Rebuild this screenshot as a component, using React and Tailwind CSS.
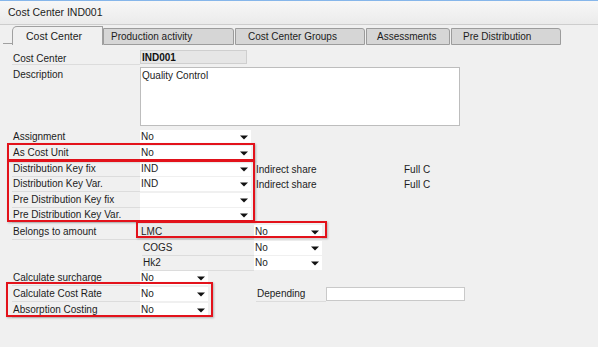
import React from 'react';

const Arrow = () => (
  <svg width="8" height="5" viewBox="0 0 8 5" className="shrink-0">
    <path d="M0 0.5 H8 L4 4.5 Z" fill="#111" />
  </svg>
);

function Label({ children, className = '' }) {
  return (
    <div className={`w-[128px] shrink-0 flex items-center pl-[1px] border-b border-[#dcdcdc] ${className}`}>
      {children}
    </div>
  );
}

function Select({ value, className = 'w-[111px]' }) {
  return (
    <div className={`h-[14px] bg-white flex items-center justify-between pl-[1px] pr-[3px] shrink-0 ${className}`}>
      <span>{value}</span>
      <Arrow />
    </div>
  );
}

function Row({ className = '', children }) {
  return <div className={`flex h-[15px] items-stretch ${className}`}>{children}</div>;
}

const Highlight = ({ className }) => (
  <div className={`absolute border-2 border-[#e3121b] shadow-[1px_1px_2px_rgba(0,0,0,0.25)] pointer-events-none ${className}`} />
);

export default function App() {
  return (
    <div className="relative w-[598px] h-[347px] overflow-hidden bg-[#f0f0f0] text-[10px] leading-none text-[#1c1c1c] font-['Liberation_Sans',Arial,sans-serif]">
      {/* window title */}
      <div className="h-px bg-[#86b6ea]" />
      <div className="h-[24px] flex items-center pl-2 bg-gradient-to-b from-[#f7f7f7] to-[#ebebeb] border-b border-[#cdcdcd] text-[10.5px]">
        Cost Center IND001
      </div>

      {/* tabs */}
      <div className="flex items-end h-[20px]">
        <div className="w-[12px] h-px bg-[#a0a0a0] mb-[1px] ml-[3px] -mr-[3px]" />
        <div className="w-[91px] h-[19px] flex items-center pl-[13px] bg-[#f0f0f0] border-l border-t border-r border-[#a0a0a0] rounded-tl-[5px] text-[10.5px]">
          Cost Center
        </div>
        <div className="w-[131px] h-[17px] flex items-center pl-[7px] bg-[#d6d6d6] border border-[#9c9c9c] rounded-tr-[3px]">
          Production activity
        </div>
        <div className="w-[130px] h-[17px] ml-[1px] flex items-center pl-[12px] bg-[#d6d6d6] border border-[#9c9c9c] rounded-tr-[3px]">
          Cost Center Groups
        </div>
        <div className="w-[84px] h-[17px] ml-[1px] flex items-center pl-[10px] bg-[#d6d6d6] border border-[#9c9c9c] rounded-tr-[3px]">
          Assessments
        </div>
        <div className="w-[110px] h-[17px] ml-[1px] flex items-center pl-[11px] bg-[#d6d6d6] border border-[#9c9c9c] rounded-tr-[3px]">
          Pre Distribution
        </div>
      </div>

      {/* form */}
      <div className="pl-[12px] pt-[5px]">
        <Row>
          <Label className="pt-[3px]">Cost Center</Label>
          <div className="w-[107px] h-[14px] flex items-center pl-[1px] pt-[2px] bg-[#e6e6e6] border border-[#cfcfcf] text-[#111] font-semibold">
            IND001
          </div>
        </Row>

        <div className="flex h-[64px] mt-px">
          <Label className="items-start pt-[4px] border-b-0">Description</Label>
          <div className="w-[320px] h-[59px] mt-px bg-white border border-[#bdbdbd] pl-[1px] pt-[3px]">
            Quality Control
          </div>
        </div>

        <Row>
          <Label>Assignment</Label>
          <Select value="No" />
        </Row>
        <Row className="mt-px">
          <Label>As Cost Unit</Label>
          <Select value="No" />
        </Row>
        <Row className="mt-px">
          <Label>Distribution Key fix</Label>
          <Select value="IND" />
          <div className="ml-[5px] w-[148px] flex items-center">Indirect share</div>
          <div className="flex items-center">Full C</div>
        </Row>
        <Row>
          <Label>Distribution Key Var.</Label>
          <Select value="IND" />
          <div className="ml-[5px] w-[148px] flex items-center">Indirect share</div>
          <div className="flex items-center">Full C</div>
        </Row>
        <Row className="mt-px">
          <Label>Pre Distribution Key fix</Label>
          <Select value="" />
        </Row>
        <Row>
          <Label>Pre Distribution Key Var.</Label>
          <Select value="" />
        </Row>

        <Row className="mt-[2px]">
          <Label>Belongs to amount</Label>
          <div className="w-[114px] flex items-center pl-px bg-[#e9e9e9] border-b border-[#dcdcdc]">LMC</div>
          <Select value="No" className="w-[68px]" />
        </Row>
        <Row className="mt-px">
          <div className="w-[130px] shrink-0" />
          <div className="w-[112px] flex items-center pl-px border-b border-[#dcdcdc]">COGS</div>
          <Select value="No" className="w-[68px]" />
        </Row>
        <Row>
          <div className="w-[130px] shrink-0" />
          <div className="w-[112px] flex items-center pl-px border-b border-[#dcdcdc]">Hk2</div>
          <Select value="No" className="w-[68px]" />
        </Row>
        <Row>
          <Label>Calculate surcharge</Label>
          <Select value="No" className="w-[68px]" />
        </Row>
        <Row className="mt-px">
          <Label>Calculate Cost Rate</Label>
          <Select value="No" className="w-[68px]" />
          <div className="ml-[48px] w-[70px] flex items-center pl-px border-b border-[#dcdcdc]">Depending</div>
          <div className="w-[139px] h-[14px] bg-white border border-[#c9c9c9]" />
        </Row>
        <Row className="mt-px">
          <Label>Absorption Costing</Label>
          <Select value="No" className="w-[68px]" />
        </Row>
      </div>

      {/* annotation boxes */}
      <Highlight className="left-[7px] top-[143px] w-[248px] h-[18px]" />
      <Highlight className="left-[7px] top-[160px] w-[248px] h-[62px]" />
      <Highlight className="left-[136px] top-[221px] w-[191px] h-[17px]" />
      <Highlight className="left-[6px] top-[282px] w-[207px] h-[35px]" />
    </div>
  );
}
